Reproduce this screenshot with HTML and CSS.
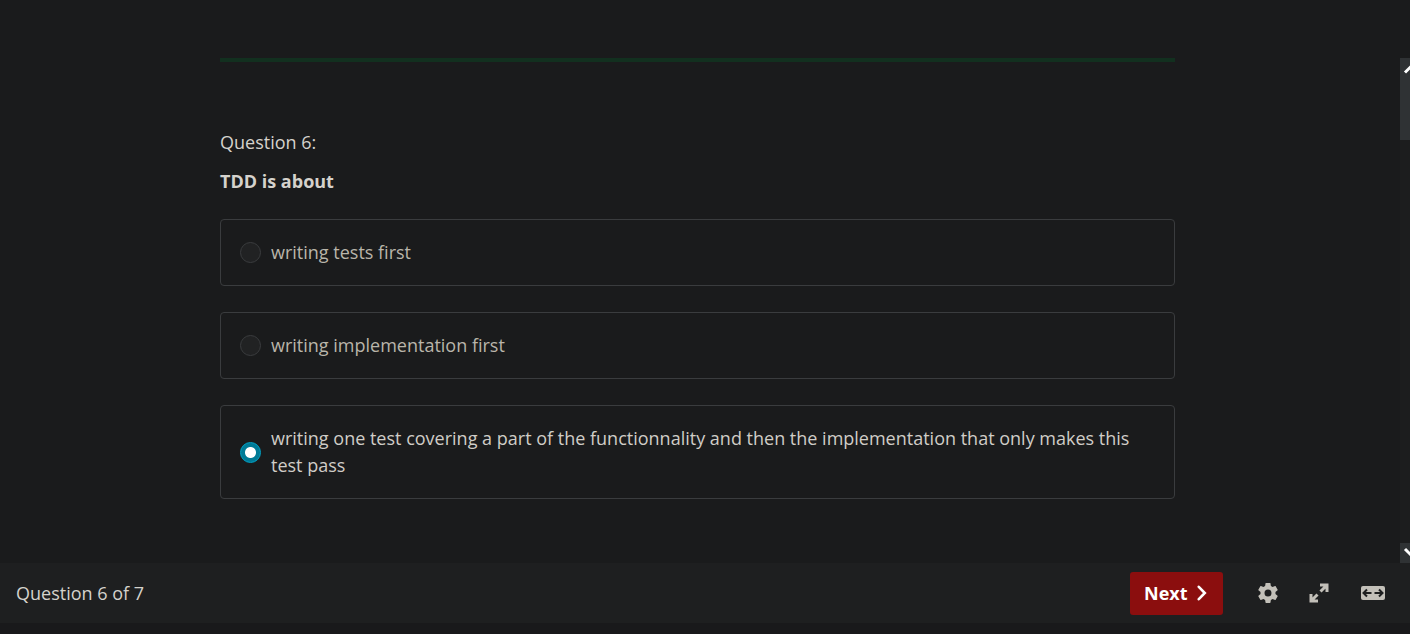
FILE: index.html
```html
<!DOCTYPE html>
<html lang="en">
<head>
<meta charset="utf-8">
<meta name="viewport" content="width=device-width, initial-scale=1">
<title>Quiz</title>
<link rel="stylesheet" href="styles.css">
</head>
<body>
<div class="player">
  <div class="stage">
    <main class="content">
      <form class="quiz" id="quiz">
        <div class="progress"></div>
        <p class="label">Question 6:</p>
        <h1 class="prompt">TDD is about</h1>
        <div class="options">
          <label class="option"><input class="radio" type="radio" name="answer"><span>writing tests first</span></label>
          <label class="option"><input class="radio" type="radio" name="answer"><span>writing implementation first</span></label>
          <label class="option chosen"><input class="radio" type="radio" name="answer" checked><span>writing one test covering a part of the functionnality and then the implementation that only makes this test pass</span></label>
        </div>
      </form>
    </main>
    <div class="scroll" aria-hidden="true">
      <div class="thumb">
        <svg class="arrow" viewBox="0 0 17 20"><path d="M5 14.500L10.500 9L16 14.500" fill="none" stroke="#fff" stroke-width="3"/></svg>
      </div>
      <div class="scroll-end">
        <svg class="arrow" viewBox="0 0 17 20"><path d="M5 6L10.500 11.500L16 6" fill="none" stroke="#fff" stroke-width="3"/></svg>
      </div>
    </div>
  </div>
  <footer class="bar">
    <span class="count">Question 6 of 7</span>
    <button class="next" type="submit" form="quiz">Next
      <svg class="chevron" viewBox="0 0 10 16"><path d="M1.800 1.800L7.800 8L1.800 14.200" fill="none" stroke="#fff" stroke-width="2.600" stroke-linecap="round"/></svg>
    </button>
    <button class="tool" type="button" aria-label="Settings">
      <svg width="20" height="20" viewBox="2 2 20 20"><path fill="currentColor" d="M19.430 12.980c.04-.32.07-.64.07-.98s-.03-.66-.07-.98l2.110-1.650c.19-.15.24-.42.12-.64l-2-3.460c-.12-.22-.39-.3-.61-.22l-2.490 1c-.52-.4-1.080-.73-1.690-.98l-.38-2.650C14.460 2.180 14.250 2 14 2h-4c-.25 0-.46.18-.49.42l-.38 2.650c-.61.25-1.170.59-1.690.98l-2.490-1c-.23-.09-.49 0-.61.22l-2 3.460c-.13.22-.07.49.12.64l2.110 1.650c-.04.32-.07.65-.07.98s.03.66.07.98l-2.110 1.650c-.19.15-.24.42-.12.64l2 3.460c.12.22.39.3.61.22l2.490-1c.52.4 1.080.73 1.690.98l.38 2.650c.03.24.24.42.49.42h4c.25 0 .46-.18.49-.42l.38-2.650c.61-.25 1.170-.59 1.690-.98l2.490 1c.23.09.49 0 .61-.22l2-3.460c.12-.22.07-.49-.12-.64zM12 15.500a3.500 3.500 0 1 1 0-7 3.500 3.500 0 0 1 0 7z"/></svg>
    </button>
    <button class="tool" type="button" aria-label="Full screen">
      <svg width="20" height="20" viewBox="0 0 20 20"><path fill="none" stroke="currentColor" stroke-width="3" d="M11 2H18V9M9 18H2V11M17.500 2.500L11.500 8.500M2.500 17.500L8.500 11.500"/></svg>
    </button>
    <button class="tool" type="button" aria-label="Expanded view">
      <svg width="26" height="16" viewBox="0 0 26 16"><rect x="1" y="1" width="24" height="14" rx="2" fill="currentColor"/><path fill="none" stroke="#1e1f20" stroke-width="2" d="M11.500 8H4M7 4.500L3.500 8L7 11.500M14.500 8H22M19 4.500L22.500 8L19 11.500"/></svg>
    </button>
  </footer>
  <div class="edge"></div>
</div>
</body>
</html>
```
FILE: styles.css
```css
* { box-sizing: border-box; }

body {
  margin: 0;
  background: #1a1b1c;
  color: #d5d2cc;
  font: 18px/27px "Segoe UI", "Open Sans", sans-serif;
}

.player {
  display: flex;
  flex-direction: column;
  min-height: 100vh;
}

.stage {
  display: flex;
  flex: 1;
}

.content {
  flex: 1;
  min-width: 0;
  padding: 58px 5px 24px 0;
}

.quiz {
  width: 100%;
  max-width: 955px;
  margin: 0 auto;
}

.progress {
  height: 4px;
  margin-bottom: 67px;
  background: #12301f;
}

.label {
  margin: 0 0 12px;
}

.prompt {
  margin: 0 0 24px;
  font-size: 18px;
  font-weight: 700;
}

.options {
  display: grid;
  gap: 26px;
}

.option {
  display: flex;
  align-items: center;
  gap: 10px;
  padding: 19px;
  border: 1px solid #3a3c3e;
  border-radius: 4px;
  color: #b9b5aa;
  cursor: pointer;
}

.chosen {
  color: #d0cdc7;
}

.radio {
  appearance: none;
  flex: none;
  width: 21px;
  height: 21px;
  margin: 0;
  border: 1px solid #3a3c3e;
  border-radius: 50%;
  background: #212223;
}

.radio:checked {
  border-color: #00a4c8;
  background: radial-gradient(circle, #fff 0 5px, #007a96 6px);
}

.scroll {
  display: flex;
  flex-direction: column;
  justify-content: space-between;
  width: 10px;
  margin-top: 58px;
  overflow: hidden;
  background: #1c1d1e;
}

.thumb {
  height: 82px;
  background: #2f3234;
}

.scroll-end {
  height: 20px;
  background: #2f3234;
}

.arrow {
  display: block;
  width: 17px;
  height: 20px;
}

.bar {
  display: flex;
  align-items: center;
  height: 60px;
  padding: 0 24px 0 16px;
  background: #1e1f20;
}

.count {
  margin-right: auto;
}

.next {
  display: flex;
  align-items: center;
  gap: 9px;
  width: 93px;
  height: 43px;
  margin-right: 35px;
  padding: 0 14px;
  border: 0;
  border-radius: 3px;
  background: #8b0e0e;
  color: #fff;
  font: inherit;
  font-weight: 700;
}

.chevron {
  width: 10px;
  height: 16px;
}

.tool {
  display: flex;
  padding: 0;
  border: 0;
  background: none;
  color: #c3c0b9;
}

.tool + .tool {
  margin-left: 31px;
}

.edge {
  height: 11px;
  background: #19191b;
}
```
